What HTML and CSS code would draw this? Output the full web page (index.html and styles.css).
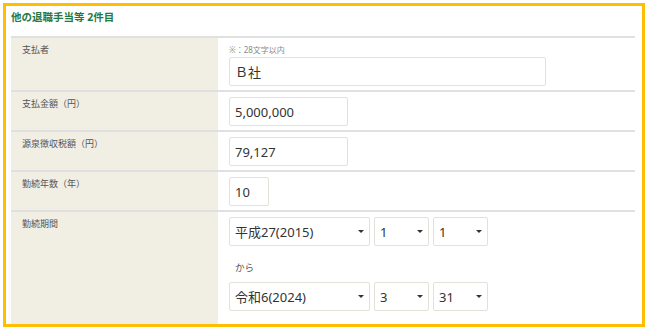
FILE: index.html
```html
<!DOCTYPE html>
<html lang="ja">
<head>
  <meta charset="UTF-8" />
  <title>他の退職手当等</title>
  <link rel="stylesheet" href="styles.css">
</head>
<body>
  <div class="frame">
    <h2 class="title">他の退職手当等 2件目</h2>
    <div class="table">
      <div class="row">
        <div class="label">支払者</div>
        <div class="value">
          <div class="note">※：28文字以内</div>
          <input type="text" class="field wide" value="Ｂ社" />
        </div>
      </div>
      <div class="row">
        <div class="label">支払金額（円）</div>
        <div class="value">
          <input type="text" class="field mid" value="5,000,000" />
        </div>
      </div>
      <div class="row">
        <div class="label">源泉徴収税額（円）</div>
        <div class="value">
          <input type="text" class="field mid" value="79,127" />
        </div>
      </div>
      <div class="row">
        <div class="label">勤続年数（年）</div>
        <div class="value">
          <input type="text" class="field short" value="10" />
        </div>
      </div>
      <div class="row last">
        <div class="label">勤続期間</div>
        <div class="value">
          <div class="dates">
            <span class="sel era"><select><option>平成27(2015)</option></select></span>
            <span class="sel num"><select><option>1</option></select></span>
            <span class="sel num"><select><option>1</option></select></span>
          </div>
          <div class="kara">から</div>
          <div class="dates">
            <span class="sel era"><select><option>令和6(2024)</option></select></span>
            <span class="sel num"><select><option>3</option></select></span>
            <span class="sel num"><select><option>31</option></select></span>
          </div>
        </div>
      </div>
    </div>
  </div>
</body>
</html>
```

FILE: styles.css
```css
body {
  margin: 0;
  font-family: "Noto Sans", "Noto Sans CJK JP", sans-serif;
  color: #333;
  background: #fff;
}
.frame {
  margin: 3px 5px 0 3px;
  border: 3px solid #ffbf00;
  height: 318px;
  padding: 0 7px 0 5px;
  overflow: hidden;
  display: flex;
  flex-direction: column;
}
.title {
  margin: 0;
  padding: 4px 0 11px;
  font-size: 10.5px;
  line-height: 15px;
  font-weight: bold;
  color: #1f7a44;
}
.table {
  flex: 1;
  display: flex;
  flex-direction: column;
}
.row {
  display: flex;
  border-top: 2px solid #e0e0e0;
}
.row.last {
  flex: 1;
}
.label {
  width: 207px;
  box-sizing: border-box;
  background: #f1eee4;
  padding: 5px 11px;
  font-size: 9px;
  line-height: 13px;
  color: #555;
}
.value {
  flex: 1;
  padding: 5px 11px 4px;
}
.note {
  font-size: 8px;
  line-height: 13px;
  color: #888;
  margin-bottom: 1px;
}
.field {
  display: block;
  box-sizing: border-box;
  height: 29px;
  border: 1px solid #e4e1d9;
  border-radius: 2px;
  padding: 0 5px;
  font-family: inherit;
  font-size: 13px;
  color: #333;
  outline: none;
}
.wide { width: 317px; }
.mid { width: 119px; }
.short { width: 40px; }
.dates {
  display: flex;
  gap: 4px;
}
.sel {
  position: relative;
  display: block;
}
.sel select {
  appearance: none;
  -webkit-appearance: none;
  width: 100%;
  box-sizing: border-box;
  height: 29px;
  border: 1px solid #e4e1d9;
  border-radius: 2px;
  background: #fff;
  padding: 0 5px;
  font-family: inherit;
  font-size: 13px;
  color: #333;
}
.sel::after {
  content: "";
  position: absolute;
  right: 6px;
  top: 13px;
  border-left: 3px solid transparent;
  border-right: 3px solid transparent;
  border-top: 3px solid #333;
}
.era { width: 141px; }
.num { width: 55px; }
.kara {
  padding: 13px 0 6px 6px;
  font-size: 9.5px;
  line-height: 17px;
  color: #555;
}
```
